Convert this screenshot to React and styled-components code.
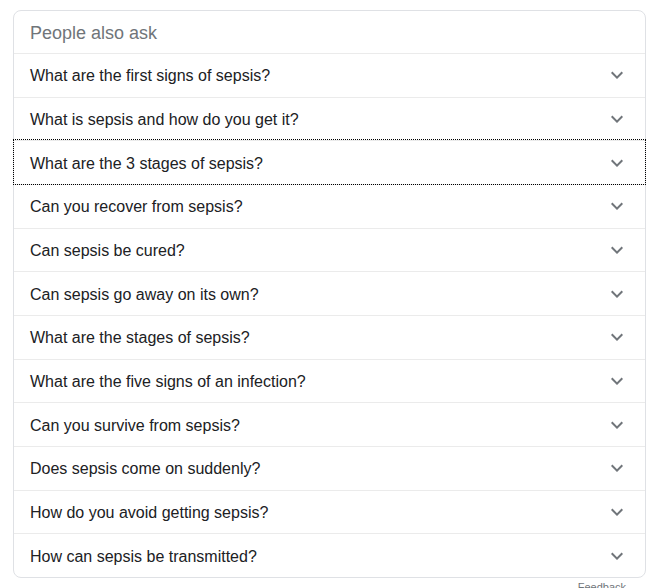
import React from "react";
import styled, { createGlobalStyle } from "styled-components";

const questions = [
  "What are the first signs of sepsis?",
  "What is sepsis and how do you get it?",
  "What are the 3 stages of sepsis?",
  "Can you recover from sepsis?",
  "Can sepsis be cured?",
  "Can sepsis go away on its own?",
  "What are the stages of sepsis?",
  "What are the five signs of an infection?",
  "Can you survive from sepsis?",
  "Does sepsis come on suddenly?",
  "How do you avoid getting sepsis?",
  "How can sepsis be transmitted?",
];

const GlobalStyle = createGlobalStyle`
  body {
    margin: 0;
    background: #fff;
    font-family: "Liberation Sans", Arial, sans-serif;
  }
`;

const Page = styled.div`
  padding: 10px 10px 0 13px;
  width: 633px;
`;

const Card = styled.div`
  border: 1px solid #dfe1e5;
  border-radius: 8px;
`;

const Header = styled.div`
  height: 42px;
  box-sizing: border-box;
  padding: 3px 16px 0;
  line-height: 38px;
  font-size: 18px;
  color: #70757a;
`;

const Row = styled.div`
  display: flex;
  align-items: center;
  justify-content: space-between;
  box-sizing: border-box;
  height: 43.67px;
  padding: 0 16px;
  border-top: 1px solid #ebebeb;
  font-size: 16px;
  color: #202124;
  cursor: pointer;
  outline: ${(p) => (p.$focused ? "1px dotted #000" : "none")};
`;

const Question = styled.span`
  padding-top: 2px;
`;

const Chevron = styled.svg`
  width: 24px;
  height: 24px;
  fill: #70757a;
  flex-shrink: 0;
`;

const Feedback = styled.div`
  margin-top: 3px;
  padding-right: 20px;
  text-align: right;
  font-size: 11px;
  color: #70757a;
`;

const App = () => {
  return (
    <Page>
      <GlobalStyle />
      <Card>
        <Header>People also ask</Header>
        {questions.map((q, i) => (
          <Row key={q} $focused={i === 2}>
            <Question>{q}</Question>
            <Chevron viewBox="0 0 24 24">
              <path d="M16.59 8.59L12 13.17 7.41 8.59 6 10l6 6 6-6z" />
            </Chevron>
          </Row>
        ))}
      </Card>
      <Feedback>Feedback</Feedback>
    </Page>
  );
};

export default App;
